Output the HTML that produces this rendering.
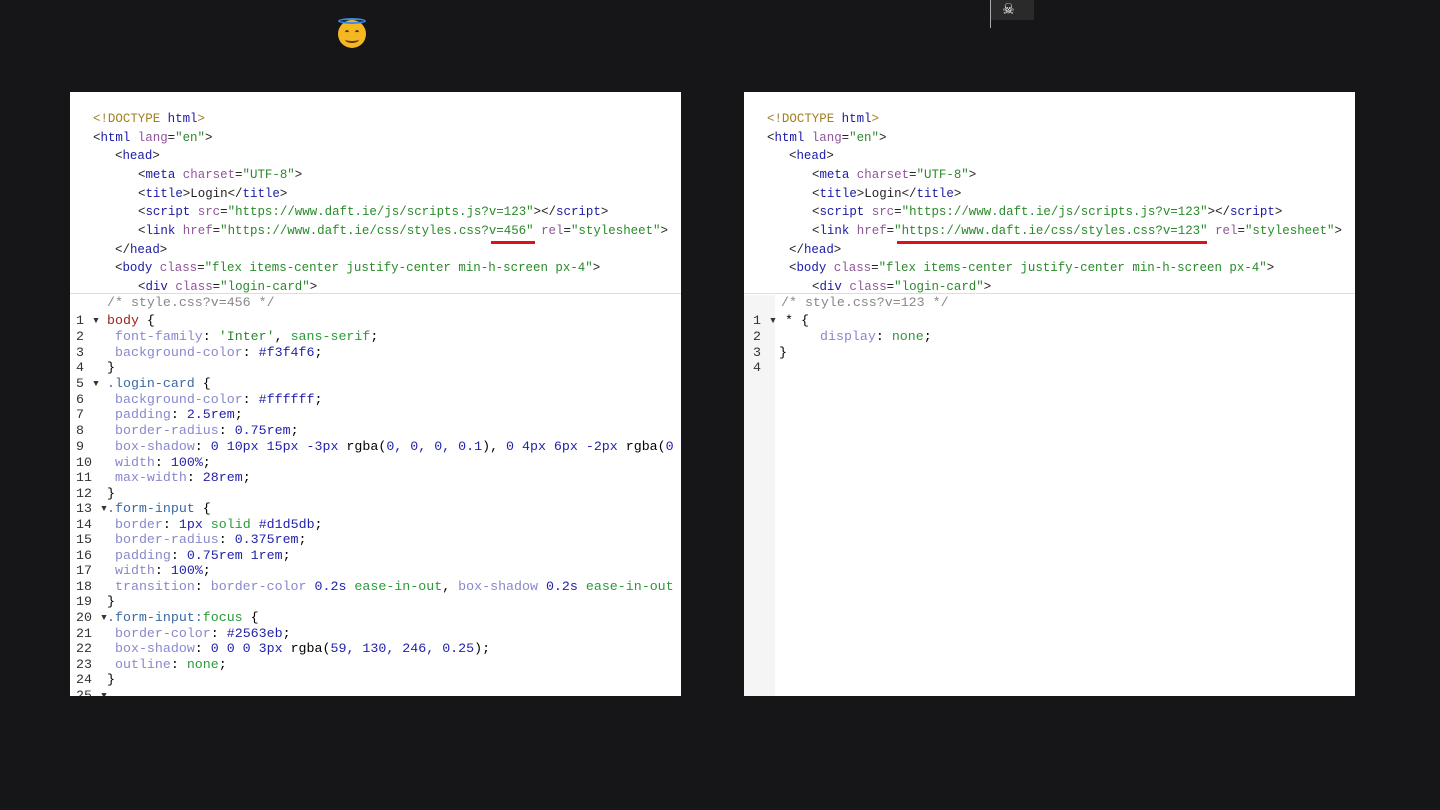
<!DOCTYPE html>
<html><head><style>
body{margin:0;width:1440px;height:810px;background:#161618;position:relative;overflow:hidden;font-family:"Liberation Mono",monospace}
.p{position:absolute;top:92px;width:611px;height:604px;background:#fff;overflow:hidden}
.h{position:absolute;left:0;top:0;right:0;height:201px;border-bottom:1px solid #ddd;font-size:12.45px;color:#222}
.h div{position:absolute;white-space:pre;line-height:18px}
.c{position:absolute;top:203px;left:0;right:0;bottom:0;font-size:13.3px}
.c div{position:absolute;white-space:pre;height:16px;line-height:16px}
.n{color:#333;left:6px}
.t{color:#1a1aa6}.a{color:#905599}.v{color:#2a8a2a}.d{color:#a08020}
.s{color:#a12020}.k{color:#5560b0}.cl{color:#3a6aa0}.pr{color:#8888cc}.nm{color:#2222aa}.g{color:#2a9a3a}.cm{color:#888}
</style></head><body>
<div style="position:absolute;left:338px;top:20px;width:28px;height:28px;border-radius:50%;background:#f5b820"></div>
<div style="position:absolute;left:345px;top:30px;width:4px;height:3px;border-top:2px solid #5a3a10;border-radius:50% 50% 0 0"></div>
<div style="position:absolute;left:355px;top:30px;width:4px;height:3px;border-top:2px solid #5a3a10;border-radius:50% 50% 0 0"></div>
<div style="position:absolute;left:345px;top:36px;width:14px;height:5px;border-bottom:2px solid #5a3a10;border-radius:0 0 50% 50%"></div>
<div style="position:absolute;left:338px;top:18px;width:28px;height:6px;border-radius:50%;border:2px solid #3a8ae0;box-sizing:border-box"></div>
<div style="position:absolute;left:990px;top:0;width:44px;height:20px;background:#2a2a2a"></div>
<div style="position:absolute;left:990px;top:0;width:1px;height:28px;background:#aaa"></div>
<div style="position:absolute;left:1003px;top:-2px;color:#fff;font-size:18px">☠</div>

<div class="p" style="left:70px">
<div class="h">
<div style="left:23px;top:18px"><span class="d">&lt;!DOCTYPE</span> <span class="t">html</span><span class="d">&gt;</span></div>
<div style="left:23px;top:37px">&lt;<span class="t">html</span> <span class="a">lang</span>=<span class="v">"en"</span>&gt;</div>
<div style="left:45px;top:55px">&lt;<span class="t">head</span>&gt;</div>
<div style="left:68px;top:74px">&lt;<span class="t">meta</span> <span class="a">charset</span>=<span class="v">"UTF-8"</span>&gt;</div>
<div style="left:68px;top:93px">&lt;<span class="t">title</span>&gt;Login&lt;/<span class="t">title</span>&gt;</div>
<div style="left:68px;top:111px">&lt;<span class="t">script</span> <span class="a">src</span>=<span class="v">"https://www.daft.ie/js/scripts.js?v=123"</span>&gt;&lt;/<span class="t">script</span>&gt;</div>
<div style="left:68px;top:130px">&lt;<span class="t">link</span> <span class="a">href</span>=<span class="v">"https://www.daft.ie/css/styles.css?v=456"</span> <span class="a">rel</span>=<span class="v">"stylesheet"</span>&gt;</div>
<div style="left:45px;top:149px">&lt;/<span class="t">head</span>&gt;</div>
<div style="left:45px;top:167px">&lt;<span class="t">body</span> <span class="a">class</span>=<span class="v">"flex items-center justify-center min-h-screen px-4"</span>&gt;</div>
<div style="left:68px;top:186px">&lt;<span class="t">div</span> <span class="a">class</span>=<span class="v">"login-card"</span>&gt;</div>
<span style="position:absolute;left:421px;top:149px;width:44px;height:3px;background:#e0101a"></span>
</div>
<div class="c">
<div style="left:37px;top:0" class="cm">/* style.css?v=456 */</div>
<div class="n" style="top:18px">1 ▾</div><div style="left:37px;top:18px"><span class="s">body</span> {</div>
<div class="n" style="top:34px">2</div><div style="left:45px;top:34px"><span class="pr">font-family</span>: <span class="v">'Inter'</span>, <span class="g">sans-serif</span>;</div>
<div class="n" style="top:50px">3</div><div style="left:45px;top:50px"><span class="pr">background-color</span>: <span class="nm">#f3f4f6</span>;</div>
<div class="n" style="top:65px">4</div><div style="left:37px;top:65px">}</div>
<div class="n" style="top:81px">5 ▾</div><div style="left:37px;top:81px"><span class="cl">.login-card</span> {</div>
<div class="n" style="top:97px">6</div><div style="left:45px;top:97px"><span class="pr">background-color</span>: <span class="nm">#ffffff</span>;</div>
<div class="n" style="top:112px">7</div><div style="left:45px;top:112px"><span class="pr">padding</span>: <span class="nm">2.5rem</span>;</div>
<div class="n" style="top:128px">8</div><div style="left:45px;top:128px"><span class="pr">border-radius</span>: <span class="nm">0.75rem</span>;</div>
<div class="n" style="top:144px">9</div><div style="left:45px;top:144px"><span class="pr">box-shadow</span>: <span class="nm">0 10px 15px -3px</span> rgba(<span class="nm">0, 0, 0, 0.1</span>), <span class="nm">0 4px 6px -2px</span> rgba(<span class="nm">0</span></div>
<div class="n" style="top:160px">10</div><div style="left:45px;top:160px"><span class="pr">width</span>: <span class="nm">100%</span>;</div>
<div class="n" style="top:175px">11</div><div style="left:45px;top:175px"><span class="pr">max-width</span>: <span class="nm">28rem</span>;</div>
<div class="n" style="top:191px">12</div><div style="left:37px;top:191px">}</div>
<div class="n" style="top:206px">13 ▾</div><div style="left:37px;top:206px"><span class="cl">.form-input</span> {</div>
<div class="n" style="top:222px">14</div><div style="left:45px;top:222px"><span class="pr">border</span>: <span class="nm">1px</span> <span class="g">solid</span> <span class="nm">#d1d5db</span>;</div>
<div class="n" style="top:237px">15</div><div style="left:45px;top:237px"><span class="pr">border-radius</span>: <span class="nm">0.375rem</span>;</div>
<div class="n" style="top:253px">16</div><div style="left:45px;top:253px"><span class="pr">padding</span>: <span class="nm">0.75rem 1rem</span>;</div>
<div class="n" style="top:268px">17</div><div style="left:45px;top:268px"><span class="pr">width</span>: <span class="nm">100%</span>;</div>
<div class="n" style="top:284px">18</div><div style="left:45px;top:284px"><span class="pr">transition</span>: <span class="pr">border-color</span> <span class="nm">0.2s</span> <span class="g">ease-in-out</span>, <span class="pr">box-shadow</span> <span class="nm">0.2s</span> <span class="g">ease-in-out</span></div>
<div class="n" style="top:299px">19</div><div style="left:37px;top:299px">}</div>
<div class="n" style="top:315px">20 ▾</div><div style="left:37px;top:315px"><span class="cl">.form-input:</span><span class="g">focus</span> {</div>
<div class="n" style="top:331px">21</div><div style="left:45px;top:331px"><span class="pr">border-color</span>: <span class="nm">#2563eb</span>;</div>
<div class="n" style="top:346px">22</div><div style="left:45px;top:346px"><span class="pr">box-shadow</span>: <span class="nm">0 0 0 3px</span> rgba(<span class="nm">59, 130, 246, 0.25</span>);</div>
<div class="n" style="top:362px">23</div><div style="left:45px;top:362px"><span class="pr">outline</span>: <span class="g">none</span>;</div>
<div class="n" style="top:377px">24</div><div style="left:37px;top:377px">}</div>
<div class="n" style="top:393px">25 ▾</div>
</div>
</div>

<div class="p" style="left:744px">
<div class="h">
<div style="left:23px;top:18px"><span class="d">&lt;!DOCTYPE</span> <span class="t">html</span><span class="d">&gt;</span></div>
<div style="left:23px;top:37px">&lt;<span class="t">html</span> <span class="a">lang</span>=<span class="v">"en"</span>&gt;</div>
<div style="left:45px;top:55px">&lt;<span class="t">head</span>&gt;</div>
<div style="left:68px;top:74px">&lt;<span class="t">meta</span> <span class="a">charset</span>=<span class="v">"UTF-8"</span>&gt;</div>
<div style="left:68px;top:93px">&lt;<span class="t">title</span>&gt;Login&lt;/<span class="t">title</span>&gt;</div>
<div style="left:68px;top:111px">&lt;<span class="t">script</span> <span class="a">src</span>=<span class="v">"https://www.daft.ie/js/scripts.js?v=123"</span>&gt;&lt;/<span class="t">script</span>&gt;</div>
<div style="left:68px;top:130px">&lt;<span class="t">link</span> <span class="a">href</span>=<span class="v">"https://www.daft.ie/css/styles.css?v=123"</span> <span class="a">rel</span>=<span class="v">"stylesheet"</span>&gt;</div>
<div style="left:45px;top:149px">&lt;/<span class="t">head</span>&gt;</div>
<div style="left:45px;top:167px">&lt;<span class="t">body</span> <span class="a">class</span>=<span class="v">"flex items-center justify-center min-h-screen px-4"</span>&gt;</div>
<div style="left:68px;top:186px">&lt;<span class="t">div</span> <span class="a">class</span>=<span class="v">"login-card"</span>&gt;</div>
<span style="position:absolute;left:153px;top:149px;width:310px;height:3px;background:#e0101a"></span>
</div>
<div class="c">
<div style="position:absolute;left:0;top:0;width:31px;height:402px;background:#f5f5f5"></div>
<div style="left:37px;top:0" class="cm">/* style.css?v=123 */</div>
<div class="n" style="top:18px;left:9px">1 ▾</div><div style="left:41px;top:18px">* {</div>
<div class="n" style="top:34px;left:9px">2</div><div style="left:76px;top:34px"><span class="pr">display</span>: <span class="g">none</span>;</div>
<div class="n" style="top:50px;left:9px">3</div><div style="left:35px;top:50px">}</div>
<div class="n" style="top:65px;left:9px">4</div>
</div>
</div>
</body></html>
